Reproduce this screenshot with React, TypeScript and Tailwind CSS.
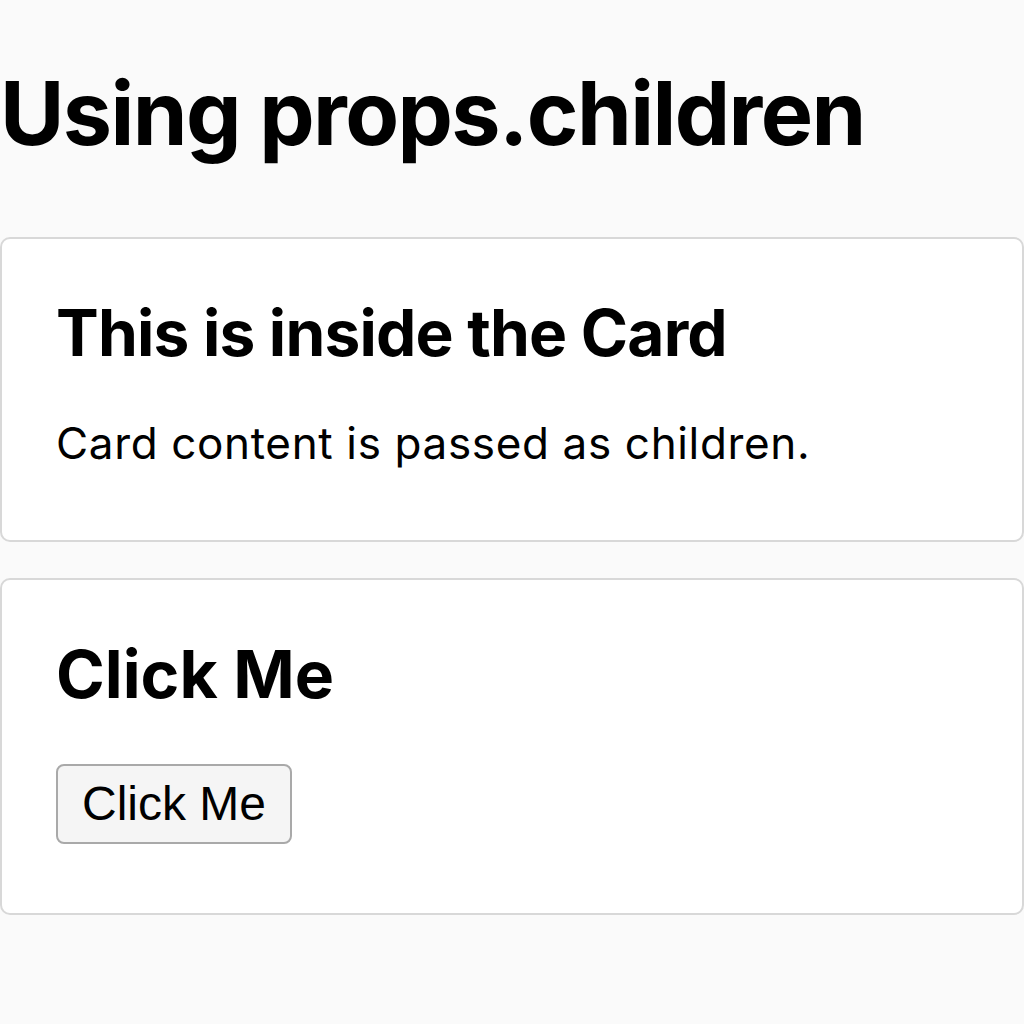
import React from 'react';

const Card: React.FC<{ children: React.ReactNode; className?: string }> = ({ children, className = '' }) => (
  <div className={`bg-white border-2 border-[#d8d8d8] rounded-[10px] px-[54px] pt-[56px] ${className}`}>
    {children}
  </div>
);

export default function App() {
  return (
    <div className="min-h-[1024px] bg-[#fafafa] text-black font-['Inter',sans-serif]">
      <h1 className="pt-[61px] text-[88px] leading-[1.2] font-bold tracking-[-1.6px]">Using props.children</h1>

      <div className="mt-[70px] flex flex-col gap-[36px]">
        <Card className="pb-[70px]">
          <h2 className="text-[64px] leading-[1.2] font-bold tracking-[-0.8px]">This is inside the Card</h2>
          <p className="mt-[46px] text-[44px] leading-[1.2] tracking-[0.65px]">Card content is passed as children.</p>
        </Card>

        <Card className="pb-[69px]">
          <h2 className="text-[66px] leading-[1.2] font-bold -mt-[1px]">Click Me</h2>
          <button className="mt-[50px] w-[236px] h-[80px] bg-[#f5f5f5] border-2 border-[#a9a9a9] rounded-[8px] text-[48px] font-['Liberation_Sans',Arial,sans-serif]">
            Click Me
          </button>
        </Card>
      </div>
    </div>
  );
}
